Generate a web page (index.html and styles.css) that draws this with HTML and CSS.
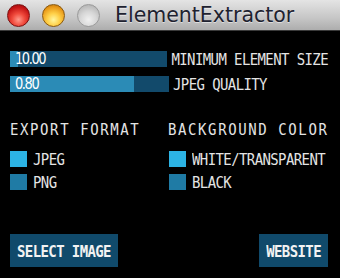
FILE: index.html
```html
<!DOCTYPE html>
<html>
<head>
<meta charset="utf-8">
<link rel="stylesheet" href="styles.css">
</head>
<body>
<div class="window">
  <header class="titlebar">
    <span class="light red"></span>
    <span class="light orange"></span>
    <span class="light gray"></span>
    <span class="title">ElementExtractor</span>
  </header>
  <main class="panel">
    <div class="sliders">
      <div class="slider-row">
        <div class="slider"><div class="fill" style="width:8px"></div><span class="value">10.00</span></div>
        <span class="label">MINIMUM ELEMENT SIZE</span>
      </div>
      <div class="slider-row">
        <div class="slider"><div class="fill" style="width:124px"></div><span class="value">0.80</span></div>
        <span class="label">JPEG QUALITY</span>
      </div>
    </div>
    <div class="options">
      <section class="group">
        <h2 class="group-title">EXPORT FORMAT</h2>
        <ul class="radio">
          <li class="radio-item"><span class="box on"></span><span class="label">JPEG</span></li>
          <li class="radio-item"><span class="box"></span><span class="label">PNG</span></li>
        </ul>
      </section>
      <section class="group">
        <h2 class="group-title">BACKGROUND COLOR</h2>
        <ul class="radio">
          <li class="radio-item"><span class="box on"></span><span class="label">WHITE/TRANSPARENT</span></li>
          <li class="radio-item"><span class="box"></span><span class="label">BLACK</span></li>
        </ul>
      </section>
    </div>
    <div class="buttons">
      <button class="btn"><span class="btn-text">SELECT IMAGE</span></button>
      <button class="btn"><span class="btn-text">WEBSITE</span></button>
    </div>
  </main>
</div>
</body>
</html>
```
FILE: styles.css
```css
html, body {
  margin: 0;
  padding: 0;
  background: #000;
}
.window {
  width: 340px;
  height: 278px;
  overflow: hidden;
  background: #000;
}
.titlebar {
  height: 31px;
  box-sizing: border-box;
  display: flex;
  align-items: center;
  padding-left: 7px;
  gap: 12px;
  background: linear-gradient(#e4e4e4, #c6c6c6 60%, #adadad);
  border-bottom: 1px solid #3a3a3a;
}
.light {
  width: 23px;
  height: 23px;
  border-radius: 50%;
  box-sizing: border-box;
  flex: none;
}
.red {
  background: radial-gradient(circle at 50% 70%, #ff9a8c 0%, #f04a3c 35%, #c41414 70%, #8a0c0c 100%);
  border: 1px solid #7a1010;
}
.orange {
  background: radial-gradient(circle at 50% 70%, #fff6a0 0%, #ffd048 35%, #e89818 70%, #a86008 100%);
  border: 1px solid #8a5a10;
}
.gray {
  background: radial-gradient(circle at 50% 70%, #f0f0f0 0%, #d6d6d6 45%, #b8b8b8 80%, #9c9c9c 100%);
  border: 1px solid #9a9a9a;
}
.title {
  margin-left: 3px;
  font-family: "DejaVu Sans", sans-serif;
  font-size: 20.5px;
  color: #1e2230;
  text-shadow: 0 1px 0 rgba(255,255,255,0.5);
  line-height: 1;
}
.panel {
  padding: 20px 12px 0 10px;
  font-family: "DejaVu Sans Mono", monospace;
  color: #e4e4e4;
}
.sliders {
  display: flex;
  flex-direction: column;
  gap: 9px;
}
.slider-row {
  display: flex;
  align-items: center;
  gap: 4px;
}
.slider {
  position: relative;
  width: 159px;
  height: 16px;
  background: #124a6b;
  display: flex;
  align-items: center;
}
.fill {
  position: absolute;
  left: 0;
  top: 0;
  bottom: 0;
  background: #2b8bb6;
}
.value {
  position: relative;
  display: inline-block;
  padding-left: 5px;
  font-family: "DejaVu Sans", sans-serif;
  font-size: 13px;
  letter-spacing: -1.4px;
  color: #fff;
  line-height: 16px;
  transform: scaleY(1.15);
}
.label {
  display: inline-block;
  font-size: 14px;
  letter-spacing: -0.6px;
  line-height: 16px;
  white-space: nowrap;
  transform: scaleY(1.12);
}
.options {
  display: flex;
  margin-top: 30px;
}
.group {
  width: 158px;
}
.group-title {
  margin: 0;
  font-weight: normal;
  font-size: 14px;
  letter-spacing: 1.6px;
  line-height: 16px;
  white-space: nowrap;
  transform: scaleY(1.1);
  transform-origin: 0 60%;
}
.radio {
  list-style: none;
  margin: 13px 0 0 0;
  padding: 0;
  display: flex;
  flex-direction: column;
  gap: 7px;
}
.radio-item {
  display: flex;
  align-items: center;
  gap: 6px;
  height: 16px;
}
.group + .group .radio-item {
  padding-left: 1px;
}
.box {
  width: 17px;
  height: 16px;
  background: #1f7ba5;
  flex: none;
}
.box.on {
  background: #2cb3e4;
}
.buttons {
  display: flex;
  justify-content: space-between;
  margin-top: 44px;
}
.btn {
  height: 33px;
  padding: 0 7px;
  border: 0;
  border-radius: 0;
  background: #104a6b;
  color: #f2f2f2;
  font-family: "DejaVu Sans Mono", monospace;
  font-weight: bold;
  font-size: 14px;
  letter-spacing: -0.6px;
}
.btn-text {
  display: inline-block;
  transform: scaleY(1.12);
}
```
